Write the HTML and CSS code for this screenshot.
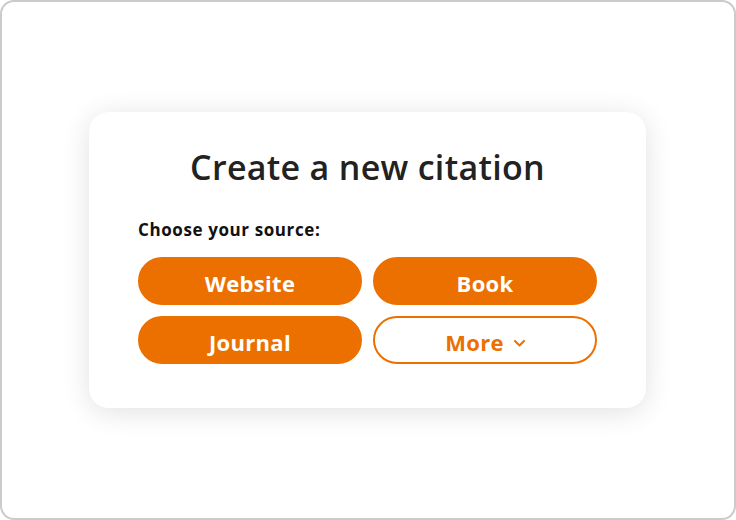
FILE: index.html
```html
<!DOCTYPE html>
<html lang="en">
<head>
<meta charset="utf-8">
<link rel="stylesheet" href="styles.css">
</head>
<body>
<div class="frame">
  <div class="card">
    <h1 class="title">Create a new citation</h1>
    <p class="label">Choose your source:</p>
    <div class="grid">
      <button class="btn">Website</button>
      <button class="btn">Book</button>
      <button class="btn">Journal</button>
      <button class="btn btn-outline">More
        <svg class="chev" width="11" height="7" viewBox="0 0 11 7"><path d="M1 1l4.5 4.5L10 1" fill="none" stroke="currentColor" stroke-width="2" stroke-linecap="round" stroke-linejoin="round"/></svg>
      </button>
    </div>
  </div>
</div>
</body>
</html>
```
FILE: styles.css
```css
* { box-sizing: border-box; }
html, body { margin: 0; padding: 0; background: #fff; }
body { font-family: "Open Sans", Lato, sans-serif; }
.frame {
  width: 736px;
  height: 520px;
  border: 2px solid #cbcbcb;
  border-radius: 14px;
  display: flex;
  align-items: center;
  justify-content: center;
  padding-right: 1px;
  background: #fff;
}
.card {
  width: 557px;
  height: 296px;
  border-radius: 20px;
  background: #fff;
  box-shadow: 0 4px 28px rgba(0,0,0,0.12);
  padding: 34px 49px 0;
}
.title {
  margin: 0;
  text-align: center;
  font-size: 34px;
  line-height: 42px;
  font-weight: 600;
  letter-spacing: 0.3px;
  color: #222;
}
.label {
  margin: 31px 0 16px;
  font-size: 17px;
  line-height: 22px;
  font-weight: 700;
  letter-spacing: 0.6px;
  color: #111;
}
.grid {
  display: grid;
  grid-template-columns: 1fr 1fr;
  gap: 11px;
}
.btn {
  height: 48px;
  border-radius: 24px;
  border: 2px solid #ec7000;
  background: #ec7000;
  color: #fff;
  font-family: "Open Sans", sans-serif;
  font-size: 22px;
  font-weight: 700;
  letter-spacing: 0.3px;
  display: flex;
  align-items: center;
  justify-content: center;
  gap: 10px;
  padding: 3px 0 0;
}
.btn-outline {
  background: #fff;
  color: #ec7000;
}
.chev { margin-top: 3px; }
```
